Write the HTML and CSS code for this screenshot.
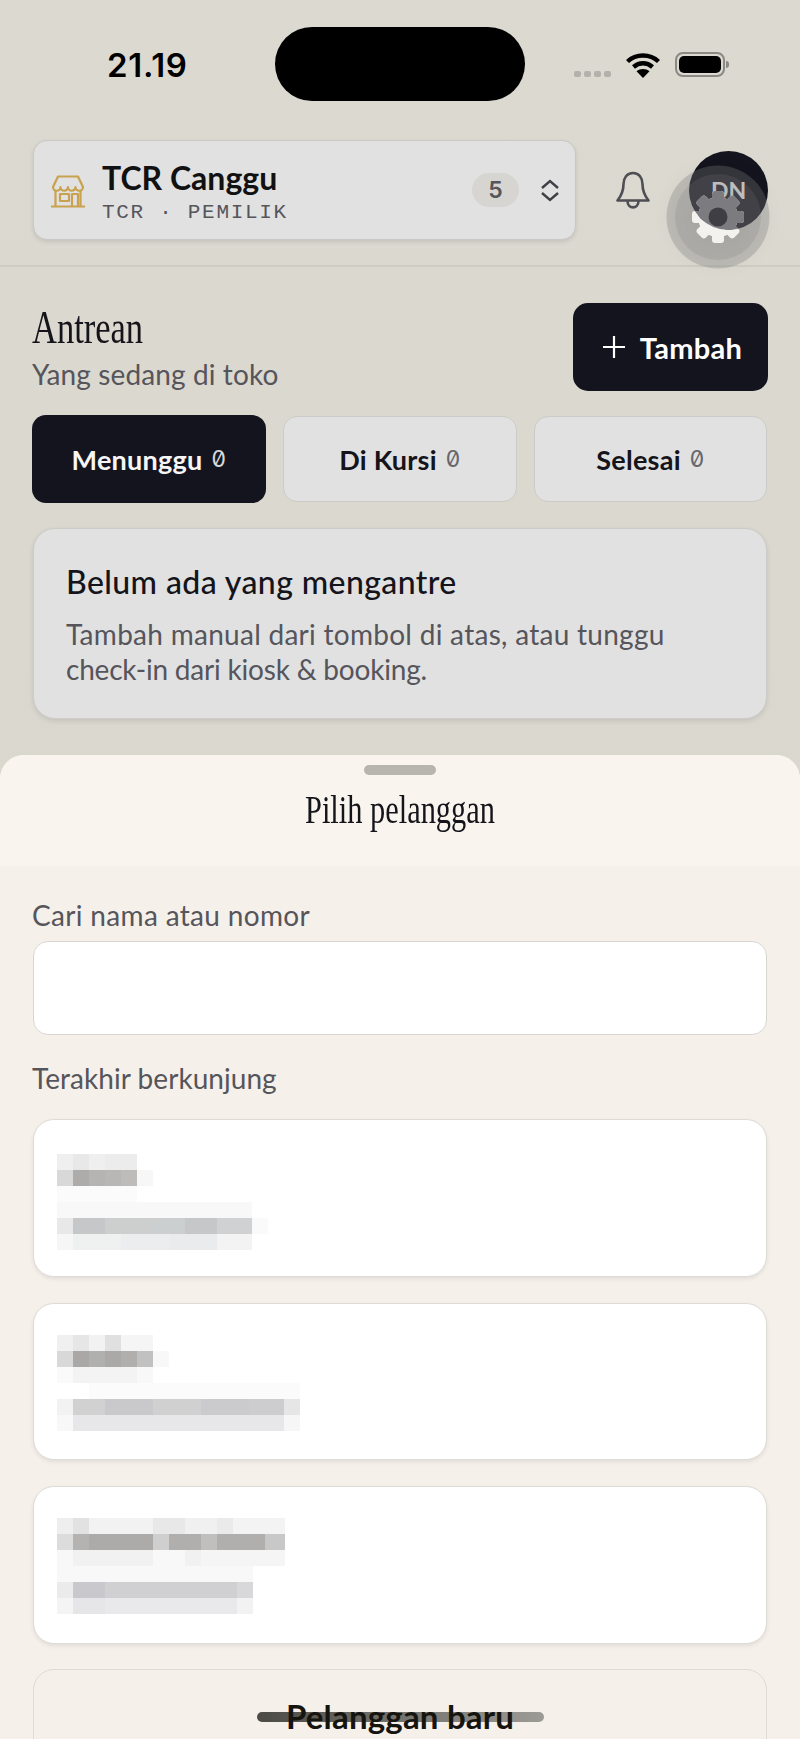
FILE: index.html
```html
<!DOCTYPE html>
<html lang="id">
<head>
<meta charset="utf-8">
<title>Antrean</title>
<link rel="stylesheet" href="styles.css">
</head>
<body>
<div class="phone">
  <div class="status">
    <span class="time">21.19</span>
    <span class="island"></span>
    <div class="status-right">
      <span class="dots"><i></i><i></i><i></i><i></i></span>
      <svg class="wifi" width="34" height="25" viewBox="0 0 34 25"><path d="M1.500 8.500C10 .5 24 .5 32.500 8.500" fill="none" stroke="#000" stroke-width="4.400"/><path d="M7.500 14c5.500-5 13.500-5 19 0" fill="none" stroke="#000" stroke-width="4.400"/><path d="M17 25l-6.500-6.700c3.700-3 9.300-3 13 0z" fill="#000"/></svg>
      <span class="battery"><i></i></span>
    </div>
  </div>

  <header class="top">
    <div class="shop">
      <svg class="store" width="34" height="33" viewBox="0 0 34 33" fill="none" stroke="#c9a24f" stroke-width="2.200" stroke-linejoin="round"><path d="M7 1.500h20l5 10.500a3.750 3.750 0 0 1-7.500 0 3.750 3.750 0 0 1-7.500 0 3.750 3.750 0 0 1-7.500 0 3.750 3.750 0 0 1-7.500 0z"/><path d="M4.500 16v15.500M29.500 16v15.500M0 31.500h34"/><rect x="9" y="19" width="9" height="7"/><path d="M21 31.500V19h6v12.500"/></svg>
      <div class="shop-text">
        <div class="shop-name">TCR Canggu</div>
        <div class="shop-role">TCR · PEMILIK</div>
      </div>
      <span class="count">5</span>
      <svg class="updown" width="20" height="23" viewBox="0 0 20 23" fill="none" stroke="#3f3f45" stroke-width="2.400"><path d="M2 9l8-7 8 7M2 14l8 7 8-7"/></svg>
    </div>
    <svg class="bell" width="34" height="39" viewBox="0 0 34 39" fill="none" stroke="#4e4e54" stroke-width="2.600" stroke-linejoin="round" stroke-linecap="round"><path d="M17 2c-6 0-9.500 5-9.500 11 0 7-2 11.500-6 16.500h31c-4-5-6-9.500-6-16.500 0-6-3.500-11-9.500-11z"/><path d="M11.500 30c0 8.500 11 8.500 11 0"/></svg>
    <div class="avatar">DN</div>
  </header>

  <section class="queue">
    <div class="queue-head">
      <div>
        <h1 class="serif-title"><span>Antrean</span></h1>
        <p class="sub">Yang sedang di toko</p>
      </div>
      <button class="add"><svg width="24" height="24" viewBox="0 0 24 24" stroke="#fff" stroke-width="2.200"><path d="M12 1v22M1 12h22"/></svg>Tambah</button>
    </div>
    <div class="tabs">
      <div class="tab active">Menunggu <b>0</b></div>
      <div class="tab">Di Kursi <b>0</b></div>
      <div class="tab">Selesai <b>0</b></div>
    </div>
    <div class="empty">
      <h2>Belum ada yang mengantre</h2>
      <p><span class="line-a">Tambah manual dari tombol di atas, atau tunggu</span><span class="line-b">check-in dari kiosk &amp; booking.</span></p>
    </div>
  </section>

  <section class="sheet">
    <div class="sheet-head">
      <span class="grab"></span>
      <h2 class="sheet-title"><span>Pilih pelanggan</span></h2>
    </div>
    <div class="sheet-body">
      <div class="label find">Cari nama atau nomor</div>
      <div class="search"></div>
      <div class="label recent">Terakhir berkunjung</div>

      <div class="person">
        <svg width="260" height="96" viewBox="0 0 260 96">
          <rect x="0" y="0" width="16" height="16" fill="#efefef"/><rect x="16" y="0" width="16" height="16" fill="#e8e8e8"/><rect x="32" y="0" width="16" height="16" fill="#efefef"/><rect x="48" y="0" width="32" height="16" fill="#ececec"/>
          <rect x="0" y="16" width="16" height="16" fill="#d8d8d8"/><rect x="16" y="16" width="16" height="16" fill="#aeacab"/><rect x="32" y="16" width="16" height="16" fill="#b5b4b3"/><rect x="48" y="16" width="16" height="16" fill="#b8b7b6"/><rect x="64" y="16" width="16" height="16" fill="#bdbcbb"/><rect x="80" y="16" width="16" height="16" fill="#f7f7f7"/>
          <rect x="0" y="32" width="80" height="16" fill="#fbfbfb"/>
          <rect x="0" y="48" width="195" height="16" fill="#f8f8f8"/>
          <rect x="0" y="64" width="16" height="16" fill="#e8e8e8"/><rect x="16" y="64" width="32" height="16" fill="#c6c7c8"/><rect x="48" y="64" width="48" height="16" fill="#cdcfcf"/><rect x="96" y="64" width="32" height="16" fill="#cccfd0"/><rect x="128" y="64" width="32" height="16" fill="#c5c7c9"/><rect x="160" y="64" width="35" height="16" fill="#d0d1d3"/><rect x="195" y="64" width="16" height="16" fill="#fafafa"/>
          <rect x="0" y="80" width="16" height="16" fill="#f6f6f6"/><rect x="16" y="80" width="48" height="16" fill="#eff0f0"/><rect x="64" y="80" width="48" height="16" fill="#ecedee"/><rect x="112" y="80" width="48" height="16" fill="#eaebed"/><rect x="160" y="80" width="35" height="16" fill="#f3f3f4"/>
        </svg>
      </div>

      <div class="person">
        <svg width="260" height="96" viewBox="0 0 260 96">
          <rect x="0" y="0" width="16" height="16" fill="#f0f0f0"/><rect x="16" y="0" width="16" height="16" fill="#e6e6e6"/><rect x="32" y="0" width="16" height="16" fill="#f2f2f2"/><rect x="48" y="0" width="16" height="16" fill="#e0e0e0"/><rect x="64" y="0" width="32" height="16" fill="#f5f5f5"/>
          <rect x="0" y="16" width="16" height="16" fill="#d8d8d8"/><rect x="16" y="16" width="16" height="16" fill="#a9a8a7"/><rect x="32" y="16" width="16" height="16" fill="#b0b0af"/><rect x="48" y="16" width="16" height="16" fill="#aaa9a8"/><rect x="64" y="16" width="16" height="16" fill="#b0afae"/><rect x="80" y="16" width="16" height="16" fill="#c2c1c1"/><rect x="96" y="16" width="16" height="16" fill="#f8f8f8"/>
          <rect x="0" y="32" width="16" height="16" fill="#fafafa"/><rect x="16" y="32" width="64" height="16" fill="#f3f3f3"/><rect x="80" y="32" width="16" height="16" fill="#f8f8f8"/>
          <rect x="32" y="48" width="211" height="16" fill="#fbfbfb"/>
          <rect x="0" y="64" width="16" height="16" fill="#f2f2f2"/><rect x="16" y="64" width="32" height="16" fill="#d1d1d1"/><rect x="48" y="64" width="48" height="16" fill="#c9c9cb"/><rect x="96" y="64" width="48" height="16" fill="#d0d0d1"/><rect x="144" y="64" width="48" height="16" fill="#cbcbcd"/><rect x="192" y="64" width="35" height="16" fill="#cdcdcf"/><rect x="227" y="64" width="16" height="16" fill="#e6e6e6"/>
          <rect x="0" y="80" width="16" height="16" fill="#f8f8f8"/><rect x="16" y="80" width="211" height="16" fill="#e7e7e9"/><rect x="227" y="80" width="16" height="16" fill="#f6f6f6"/>
        </svg>
      </div>

      <div class="person">
        <svg width="260" height="96" viewBox="0 0 260 96">
          <rect x="0" y="0" width="16" height="16" fill="#eeeeee"/><rect x="16" y="0" width="16" height="16" fill="#e2e2e2"/><rect x="32" y="0" width="64" height="16" fill="#f2f2f2"/><rect x="96" y="0" width="32" height="16" fill="#e8e8e8"/><rect x="128" y="0" width="32" height="16" fill="#f0f0f0"/><rect x="160" y="0" width="16" height="16" fill="#eaeaea"/><rect x="176" y="0" width="52" height="16" fill="#f3f3f3"/>
          <rect x="0" y="16" width="16" height="16" fill="#dcdcdc"/><rect x="16" y="16" width="16" height="16" fill="#b4b3b2"/><rect x="32" y="16" width="64" height="16" fill="#acabaa"/><rect x="96" y="16" width="16" height="16" fill="#cfcfcf"/><rect x="112" y="16" width="32" height="16" fill="#b0afae"/><rect x="144" y="16" width="16" height="16" fill="#c0bfbe"/><rect x="160" y="16" width="48" height="16" fill="#b0afae"/><rect x="208" y="16" width="20" height="16" fill="#c8c8c8"/>
          <rect x="0" y="32" width="16" height="16" fill="#f8f8f8"/><rect x="16" y="32" width="80" height="16" fill="#f1f1f1"/><rect x="96" y="32" width="32" height="16" fill="#f8f8f8"/><rect x="128" y="32" width="16" height="16" fill="#f1f1f1"/><rect x="144" y="32" width="84" height="16" fill="#f5f5f5"/>
          <rect x="0" y="48" width="196" height="16" fill="#f8f8f8"/>
          <rect x="0" y="64" width="16" height="16" fill="#ebebeb"/><rect x="16" y="64" width="32" height="16" fill="#c9c9cd"/><rect x="48" y="64" width="132" height="16" fill="#d0d0d3"/><rect x="180" y="64" width="16" height="16" fill="#d8d8da"/>
          <rect x="0" y="80" width="16" height="16" fill="#f4f4f5"/><rect x="16" y="80" width="32" height="16" fill="#e6e6e9"/><rect x="48" y="80" width="132" height="16" fill="#e9e9eb"/><rect x="180" y="80" width="16" height="16" fill="#f2f2f3"/>
        </svg>
      </div>

      <div class="new-customer">
        <span class="home-bar"></span>
        <span class="new-label">Pelanggan baru</span>
      </div>
    </div>
  </section>

  <svg class="touch" width="112" height="112" viewBox="0 0 112 112">
    <defs>
      <g id="gear">
        <circle cx="56" cy="56" r="20"/>
        <rect x="50" y="30" width="12" height="12" rx="3"/>
        <rect x="50" y="30" width="12" height="12" rx="3" transform="rotate(45 56 56)"/>
        <rect x="50" y="30" width="12" height="12" rx="3" transform="rotate(90 56 56)"/>
        <rect x="50" y="30" width="12" height="12" rx="3" transform="rotate(135 56 56)"/>
        <rect x="50" y="30" width="12" height="12" rx="3" transform="rotate(180 56 56)"/>
        <rect x="50" y="30" width="12" height="12" rx="3" transform="rotate(225 56 56)"/>
        <rect x="50" y="30" width="12" height="12" rx="3" transform="rotate(270 56 56)"/>
        <rect x="50" y="30" width="12" height="12" rx="3" transform="rotate(315 56 56)"/>
      </g>
      <clipPath id="inAvatar"><circle cx="66.500" cy="29.500" r="39.500"/></clipPath>
    </defs>
    <circle cx="56" cy="56" r="51.500" fill="#7a7a7a" fill-opacity=".32"/>
    <circle cx="56" cy="56" r="43" fill="#7a7a7a" fill-opacity=".2"/>
    <use href="#gear" fill="#f3f2ef"/>
    <use href="#gear" fill="#7c7c80" clip-path="url(#inAvatar)"/>
    <circle cx="56" cy="56" r="9.500" fill="#3e3e44"/>
  </svg>
</div>
</body>
</html>
```

FILE: styles.css
```css
* { box-sizing: border-box; }
html, body { margin: 0; padding: 0; }
body {
  width: 800px;
  height: 1739px;
  overflow: hidden;
  background: #dad7cf;
  font-family: "Lato", "Noto Sans", sans-serif;
  color: #14141a;
}
.phone {
  position: relative;
  width: 800px;
  height: 1739px;
  overflow: hidden;
  display: flex;
  flex-direction: column;
  background: linear-gradient(#dcd9d1, #d8d5cd);
}
.status {
  height: 140px;
  flex: none;
  display: grid;
  grid-template-columns: 275px 250px 275px;
  padding-top: 27px;
  align-items: start;
}
.time {
  justify-self: start;
  margin: 20px 0 0 107px;
  font-family: "Inter", sans-serif;
  font-weight: 600;
  font-size: 33px;
  line-height: 36px;
  letter-spacing: .7px;
  color: #000;
}
.island {
  height: 74px;
  background: #000;
  border-radius: 37px;
}
.status-right {
  display: flex;
  align-items: flex-start;
  padding-left: 49px;
}
.dots { display: flex; gap: 3px; margin-top: 44px; }
.dots i { width: 7px; height: 6px; border-radius: 2px; background: #b3b1ab; }
.wifi { margin: 26px 0 0 15px; }
.battery {
  position: relative;
  margin: 25px 0 0 15px;
  width: 50px;
  height: 25px;
  border: 2px solid #8a8984;
  border-radius: 8px;
  padding: 2px;
  display: block;
}
.battery i { display: block; height: 100%; background: #000; border-radius: 5px; }
.battery::after {
  content: "";
  position: absolute;
  right: -6px;
  top: 7px;
  width: 3px;
  height: 7px;
  background: #8a8984;
  border-radius: 0 3px 3px 0;
}
.top {
  flex: none;
  display: flex;
  align-items: center;
  height: 127px;
  padding: 0 32px 25px 33px;
  border-bottom: 2px solid #cfccc4;
}
.shop {
  width: 543px;
  height: 100px;
  display: flex;
  align-items: center;
  padding: 0 15px 0 17px;
  background: #e1e1e1;
  border: 1px solid #c9c8c4;
  border-radius: 14px;
  box-shadow: 0 2px 4px rgba(0,0,0,.1);
}
.store { flex: none; margin-top: 3px; }
.shop-text { margin-left: 17px; flex: 1; padding-top: 5px; }
.shop-name {
  font-weight: 700;
  font-size: 32px;
  line-height: 36px;
  color: #111;
}
.shop-role {
  margin-top: 5px;
  font-family: "Liberation Mono", monospace;
  font-size: 21px;
  line-height: 24px;
  letter-spacing: 1.7px;
  color: #55555b;
}
.count {
  width: 47px;
  height: 34px;
  border-radius: 17px;
  background: #d6d5d2;
  text-align: center;
  font-family: "Inter", sans-serif;
  font-weight: 600;
  font-size: 23px;
  line-height: 34px;
  color: #55555a;
}
.updown { margin-left: 21px; }
.bell { margin-left: 40px; }
.avatar {
  margin-left: 39px;
  width: 79px;
  height: 79px;
  border-radius: 50%;
  background: #14141f;
  color: #fff;
  text-align: center;
  font-weight: 700;
  font-size: 23px;
  line-height: 79px;
}
.queue {
  flex: none;
  padding: 36px 32px 0 32px;
}
.queue-head { display: flex; justify-content: space-between; align-items: flex-start; }
.serif-title {
  margin: 0;
  height: 50px;
  font-family: "Liberation Serif", serif;
  font-weight: 400;
  font-size: 46px;
  line-height: 50px;
  color: #14141a;
}
.serif-title span { display: inline-block; transform: scaleX(.75); transform-origin: 0 50%; }
.sub {
  margin: 4px 0 0;
  font-size: 28px;
  line-height: 34px;
  letter-spacing: .12px;
  color: #55555b;
}
.add {
  width: 195px;
  height: 88px;
  display: flex;
  align-items: center;
  justify-content: center;
  gap: 14px;
  padding: 0 0 0 3px;
  background: #14141f;
  border: 0;
  border-radius: 15px;
  color: #fff;
  font-family: inherit;
  font-weight: 700;
  font-size: 29px;
  letter-spacing: .3px;
}
.tabs {
  display: grid;
  grid-template-columns: 234px 234px 233px;
  column-gap: 17px;
  margin-top: 24px;
  align-items: center;
}
.tab {
  height: 86px;
  display: flex;
  align-items: center;
  justify-content: center;
  background: #e1e1e1;
  border: 1px solid #cccbc7;
  border-radius: 14px;
  font-weight: 700;
  font-size: 27px;
  letter-spacing: .25px;
  white-space: pre;
  color: #14141a;
}
.tab b {
  font-family: "Inter", sans-serif;
  font-feature-settings: "zero" 1, "tnum" 1;
  font-weight: 400;
  font-size: 23px;
  color: #66666c;
  margin-left: 2px;
}
.tab.active { height: 88px; background: #14141f; border: 0; color: #f6f6f6; }
.tab.active b { color: #d8d8da; }
.empty {
  margin: 25px 1px 0 1px;
  height: 191px;
  padding: 33px 32px 0;
  background: #e1e1e1;
  border: 1px solid #cccbc7;
  border-radius: 22px;
  box-shadow: 0 2px 5px rgba(0,0,0,.1);
}
.empty h2 { margin: 0; font-weight: 500; font-size: 32px; line-height: 40px; letter-spacing: .4px; color: #14141a; }
.empty p { margin: 15px 0 0; font-size: 28px; line-height: 35px; color: #55555b; }
.line-a { display: block; letter-spacing: .28px; }
.line-b { display: block; letter-spacing: -.2px; }
.sheet {
  flex: 1;
  margin-top: 36px;
  background: #f5f0ea;
  border-radius: 24px 24px 0 0;
  overflow: hidden;
}
.sheet-head {
  height: 111px;
  padding-top: 10px;
  background: #f9f5ee;
  text-align: center;
}
.grab { display: block; width: 72px; height: 10px; margin: 0 auto; border-radius: 5px; background: #b8b5af; }
.sheet-title {
  margin: 12px 0 0;
  font-family: "Liberation Serif", serif;
  font-weight: 400;
  font-size: 40px;
  line-height: 46px;
  color: #14141a;
}
.sheet-title span { display: inline-block; transform: scaleX(.76); }
.sheet-body { padding: 32px 33px 0 32px; }
.label {
  font-size: 28px;
  line-height: 34px;
  color: #55555b;
}
.find { letter-spacing: .33px; }
.search {
  margin: 9px 0 0 1px;
  height: 94px;
  background: #fff;
  border: 1px solid #d9d7d2;
  border-radius: 15px;
}
.recent { margin-top: 26px; letter-spacing: .05px; }
.person {
  margin: 24px 0 0 1px;
  height: 157.5px;
  padding: 34px 0 0 23px;
  background: #fff;
  border: 1px solid #dedcd7;
  border-radius: 21px;
  box-shadow: 0 2px 4px rgba(0,0,0,.08);
}
.person svg { display: block; filter: blur(.6px); }
.person + .person { margin-top: 26px; padding-top: 31px; }
.new-customer {
  position: relative;
  margin: 25px 0 0 1px;
  height: 100px;
  padding-top: 26px;
  border: 1px solid #dedcd7;
  border-radius: 21px;
  text-align: center;
}
.home-bar {
  position: absolute;
  left: 223px;
  top: 42px;
  width: 287px;
  height: 10px;
  border-radius: 5px;
  background: linear-gradient(90deg, #4c4a45, #9d9b96);
}
.new-label {
  position: relative;
  font-weight: 700;
  font-size: 33px;
  line-height: 40px;
  letter-spacing: .2px;
  color: #16140f;
}
.touch {
  position: absolute;
  left: 662px;
  top: 161px;
  filter: drop-shadow(0 0 8px rgba(0,0,0,.08));
}
```
